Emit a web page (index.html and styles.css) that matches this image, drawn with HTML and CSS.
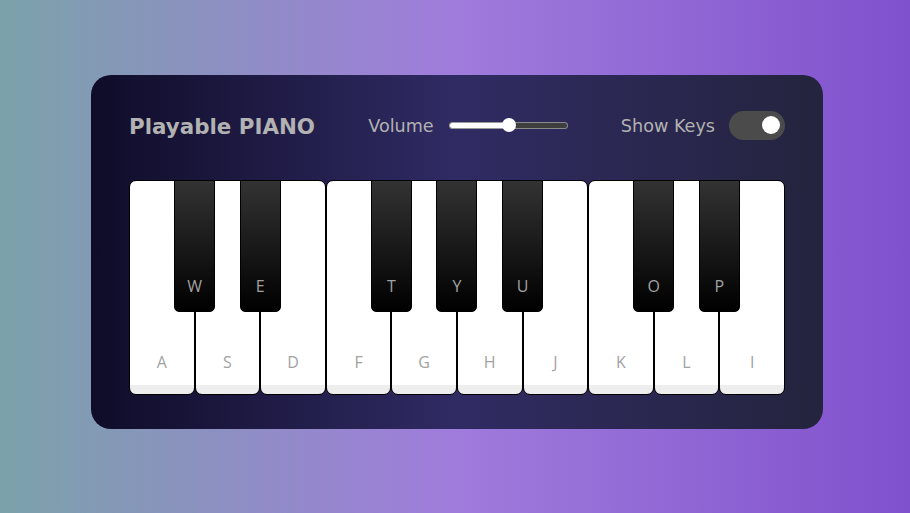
FILE: index.html
```html
<!DOCTYPE html>
<html lang="en">
<head>
<meta charset="utf-8">
<title>Playable Piano</title>
<link rel="stylesheet" href="styles.css">
</head>
<body>
<div class="wrapper">
  <header class="header">
    <h2 class="title">Playable PIANO</h2>
    <div class="column volume">
      <span class="label">Volume</span>
      <div class="slider">
        <div class="slider-fill"></div>
        <div class="slider-thumb"></div>
        <div class="slider-rest"></div>
      </div>
    </div>
    <div class="column keys-toggle">
      <span class="label">Show Keys</span>
      <div class="toggle"><div class="knob"></div></div>
    </div>
  </header>
  <ul class="piano-keys">
    <li class="key white"><span>a</span></li>
    <li class="key black"><span>w</span></li>
    <li class="key white"><span>s</span></li>
    <li class="key black"><span>e</span></li>
    <li class="key white"><span>d</span></li>
    <li class="key white"><span>f</span></li>
    <li class="key black"><span>t</span></li>
    <li class="key white"><span>g</span></li>
    <li class="key black"><span>y</span></li>
    <li class="key white"><span>h</span></li>
    <li class="key black"><span>u</span></li>
    <li class="key white"><span>j</span></li>
    <li class="key white"><span>k</span></li>
    <li class="key black"><span>o</span></li>
    <li class="key white"><span>l</span></li>
    <li class="key black"><span>p</span></li>
    <li class="key white"><span>i</span></li>
  </ul>
</div>
</body>
</html>
```

FILE: styles.css
```css
* { box-sizing: border-box; }
html, body { margin: 0; padding: 0; }
body {
  width: 910px;
  height: 513px;
  overflow: hidden;
  font-family: "Open Sans", "Noto Sans", sans-serif;
  background: linear-gradient(to right, #7ba2aa 0%, #a07cdc 50%, #8051cd 100%);
  padding: 75px 0 0 91px;
}
.wrapper {
  width: 732px;
  height: 354px;
  padding: 31px 38px 34px 38px;
  border-radius: 20px;
  background: linear-gradient(to right, #0f0c29, #302b63, #24243e);
}
.header {
  display: flex;
  align-items: center;
  justify-content: space-between;
  height: 38px;
  color: #b2b2b2;
  font-family: "DejaVu Sans", "Open Sans", sans-serif;
}
.title {
  margin: 0;
  padding-top: 2px;
  font-size: 21.4px;
  font-weight: 700;
  letter-spacing: 0;
}
.column { display: flex; align-items: center; }
.label {
  font-size: 17.6px;
  font-weight: 400;
  margin-right: 15px;
  padding-top: 2px;
}
.slider {
  width: 119px;
  height: 14px;
  display: flex;
  align-items: center;
}
.slider-fill {
  width: 54px;
  height: 7px;
  background: #fff;
  border: 1px solid #9a9a9a;
  border-right: none;
  border-radius: 4px 0 0 4px;
}
.slider-thumb {
  width: 14px;
  height: 14px;
  border-radius: 50%;
  background: #fff;
  margin: 0 -1px;
  position: relative;
  z-index: 1;
}
.slider-rest {
  flex: 1;
  height: 7px;
  background: #3e3e3e;
  border: 1px solid #8a8a8a;
  border-left: none;
  border-radius: 0 4px 4px 0;
}
.keys-toggle .label { margin-right: 14px; }
.toggle {
  width: 56px;
  height: 29px;
  border-radius: 15px;
  background: #4b4b4b;
  display: flex;
  align-items: center;
  justify-content: flex-end;
  padding-right: 5px;
}
.knob {
  width: 18px;
  height: 18px;
  border-radius: 50%;
  background: #fff;
}
.piano-keys {
  display: flex;
  list-style: none;
  margin: 36px 0 0 0;
  padding: 0;
  width: 656px;
}
.key {
  position: relative;
  text-transform: uppercase;
  border: 1px solid #000;
}
.key span {
  position: absolute;
  left: 0;
  width: 100%;
  text-align: center;
  color: #a2a2a2;
  font-size: 16px;
  font-weight: 400;
  line-height: 1;
}
.white {
  flex: 0 0 65.6px;
  height: 215px;
  border-radius: 7px;
  background: linear-gradient(#fff 96%, #eee 96%);
}
.white span { bottom: 24px; }
.black {
  flex: 0 0 41px;
  height: 132px;
  margin: 0 -20.5px;
  z-index: 2;
  border-radius: 0 0 5px 5px;
  background: linear-gradient(#333, #000);
}
.black span { bottom: 17px; }
```
